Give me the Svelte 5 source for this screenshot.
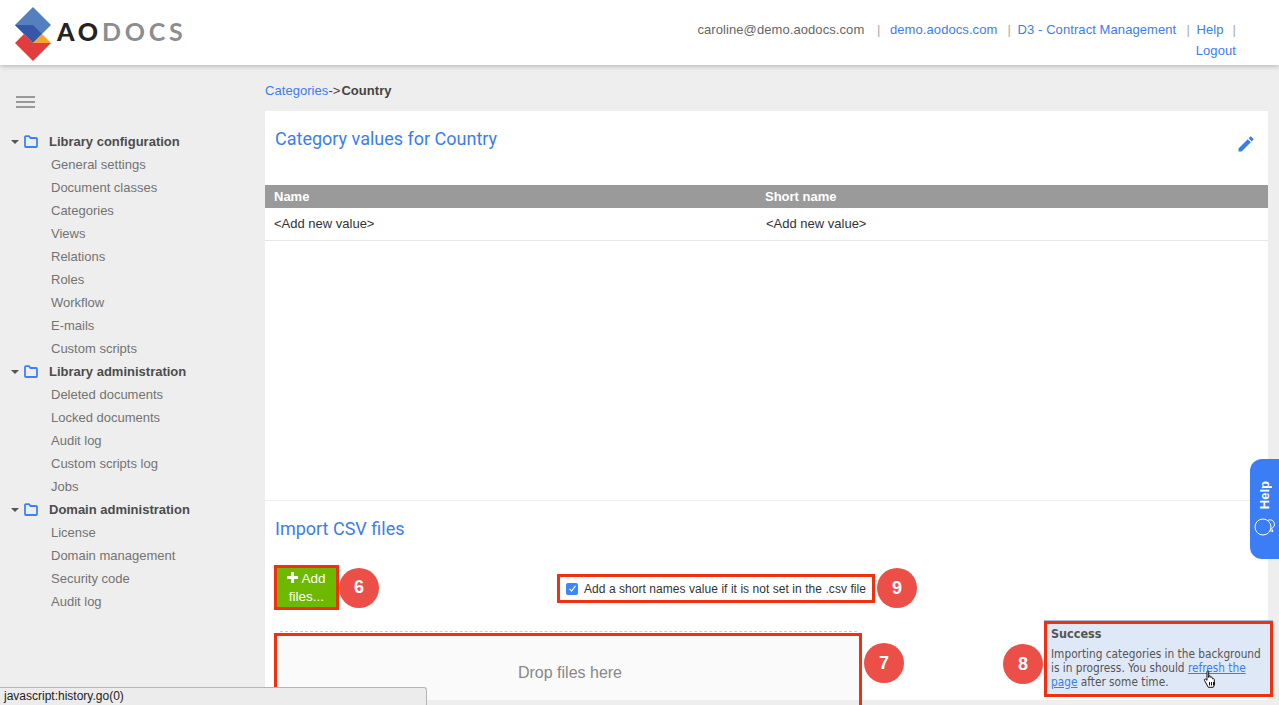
<script>
  const groups = [
    {
      title: "Library configuration",
      items: ["General settings", "Document classes", "Categories", "Views", "Relations", "Roles", "Workflow", "E-mails", "Custom scripts"]
    },
    {
      title: "Library administration",
      items: ["Deleted documents", "Locked documents", "Audit log", "Custom scripts log", "Jobs"]
    },
    {
      title: "Domain administration",
      items: ["License", "Domain management", "Security code", "Audit log"]
    }
  ];
</script>

<header class="topbar">
  <div class="logo">
    <svg width="37" height="56" viewBox="0 0 37 56" aria-hidden="true">
      <polygon points="18,1 36,19 18,37 0,19" fill="#5580c0" />
      <polygon points="0,19 18,19 27,28 18,37" fill="#3458a8" />
      <polygon points="0,37 9,28 18,37 36,37 18,55" fill="#e23c3c" />
      <polygon points="18,37 27,28 36,37" fill="#f5a62b" />
    </svg>
    <span class="wordmark"><b>AO</b>DOCS</span>
  </div>
  <nav class="toplinks">
    <span class="user">caroline@demo.aodocs.com</span>
    <span class="sep first">|</span><a href="#top">demo.aodocs.com</a>
    <span class="sep">|</span><a href="#top">D3 - Contract Management</a>
    <span class="sep">|</span><a href="#top">Help</a><span class="sep last">|</span>
    <a href="#top">Logout</a>
  </nav>
</header>

<div class="layout">
  <aside class="sidebar">
    <div class="burger"><i></i><i></i><i></i></div>
    {#each groups as group}
      <div class="group-title">
        <span class="caret"></span>
        <svg width="14" height="13" viewBox="0 0 14 13" aria-hidden="true">
          <path d="M1 3.5V11a1 1 0 0 0 1 1h10a1 1 0 0 0 1-1V4a1 1 0 0 0-1-1H6.5L5 1.2H2a1 1 0 0 0-1 1z" fill="none" stroke="#3b82f6" stroke-width="1.8" />
        </svg>
        <span>{group.title}</span>
      </div>
      <ul>
        {#each group.items as item}
          <li>{item}</li>
        {/each}
      </ul>
    {/each}
  </aside>

  <main class="content">
    <div class="crumbs"><a href="#top">Categories</a>-&gt;<b>Country</b></div>

    <section class="panel">
      <div class="panel-head">
        <h2>Category values for Country</h2>
        <svg class="edit" width="20" height="20" viewBox="0 0 24 24" aria-hidden="true">
          <path d="M3 17.25V21h3.75L17.81 9.94l-3.75-3.75L3 17.25zM20.71 7.04c.39-.39.39-1.02 0-1.41l-2.34-2.34c-.39-.39-1.02-.39-1.41 0l-1.83 1.83 3.75 3.75 1.83-1.83z" fill="#3b7de8" />
        </svg>
      </div>

      <div class="table">
        <div class="thead"><span>Name</span><span>Short name</span></div>
        <div class="trow"><span>&lt;Add new value&gt;</span><span class="second">&lt;Add new value&gt;</span></div>
      </div>

      <div class="import">
        <h2>Import CSV files</h2>
        <div class="toolbar">
          <button class="add">
            <svg width="11" height="11" viewBox="0 0 11 11" aria-hidden="true"><path d="M4 0h3v4h4v3H7v4H4V7H0V4h4z" fill="#fff" /></svg>
            Add files...
          </button>
          <span class="badge">6</span>
          <label class="short">
            <span class="check">
              <svg width="9" height="9" viewBox="0 0 9 9" aria-hidden="true"><path d="M1.5 4.8 3.6 7 7.5 1.8" fill="none" stroke="#fff" stroke-width="1.2" /></svg>
            </span>
            Add a short names value if it is not set in the .csv file
          </label>
          <span class="badge after-short">9</span>
        </div>
        <div class="dropline"></div>
        <div class="dropzone">Drop files here</div>
        <span class="badge b7">7</span>
      </div>

      <span class="badge b8">8</span>
      <div class="notice">
        <strong>Success</strong>
        <p>Importing categories in the background is in progress. You should <a href="#top">refresh the page</a> after some time.</p>
        <svg class="hand" width="15" height="19" viewBox="0 0 15 19" aria-hidden="true">
          <path d="M4 1.2c.8-.5 1.700 0 1.700.9v5.400l.3-1.500c.8-.5 1.600-.2 1.700.7l.1.800c.7-.6 1.600-.3 1.700.6l.1.700c.8-.5 1.600-.1 1.700.8l.2 4.400c0 1.400-.6 2.300-1.300 3.300H5.300L1.500 10.500c-.6-.9.500-1.900 1.400-1.200l1.100 1z" fill="#fff" stroke="#111" stroke-width="1" />
          <path d="M6.500 12v3.500M8.500 12v3.500M10.500 12v3.500" stroke="#111" stroke-width="1" />
        </svg>
      </div>
    </section>
  </main>
</div>

<aside class="help-tab">
  <span>Help</span>
  <svg width="24" height="24" viewBox="0 0 24 24" aria-hidden="true">
    <circle cx="10" cy="10" r="8" fill="none" stroke="#fff" stroke-width="1" />
    <path d="M14.500 3.500a4.500 4.500 0 1 1 4 8l1.500 3-3.500-1" fill="none" stroke="#fff" stroke-width="1" />
  </svg>
</aside>

<div class="status">javascript:history.go(0)</div>

<style>
  :global(body) {
    background: #eeeeee;
    font-family: "Liberation Sans", Arial, sans-serif;
    font-size: 13px;
    color: #444;
    overflow: hidden;
    height: 705px;
  }

  a {
    color: #3b7df0;
    text-decoration: none;
  }

  .topbar {
    height: 65px;
    background: #fff;
    box-shadow: 0 1px 5px rgba(0, 0, 0, 0.25);
    display: flex;
    justify-content: space-between;
    position: relative;
  }

  .logo {
    display: flex;
    align-items: center;
    gap: 5px;
    padding: 2px 0 0 15px;
  }

  .wordmark {
    font-family: Lato, sans-serif;
    font-weight: 700;
    font-size: 25px;
    letter-spacing: 3.800px;
    color: #8b8e91;
    margin-top: -5px;
  }

  .wordmark b {
    color: #232323;
  }

  .toplinks {
    width: 545px;
    padding: 19px 43px 0 0;
    text-align: right;
    line-height: 21px;
    letter-spacing: 0.08px;
  }

  .user {
    color: #666;
  }

  .sep {
    color: #aaa;
    margin: 0 6.500px;
  }

  .sep.first {
    margin: 0 9.500px 0 9px;
  }

  .sep.last {
    margin: 0 0 0 9px;
  }

  .layout {
    display: grid;
    grid-template-columns: 265px 1fr;
  }

  .sidebar {
    padding-top: 31px;
  }

  .burger {
    margin: 0 0 22px 16px;
    width: 19px;
    display: flex;
    flex-direction: column;
    gap: 3px;
  }

  .burger i {
    height: 2px;
    background: #999;
  }

  .group-title {
    height: 23px;
    display: flex;
    align-items: center;
    font-weight: 700;
    font-size: 13px;
    color: #4c4c4c;
    padding-left: 11px;
  }

  .group-title svg {
    margin: 0 11px 0 5px;
  }

  .caret {
    width: 0;
    height: 0;
    border: 4px solid transparent;
    border-top: 4px solid #555;
    border-bottom: 0;
  }

  ul {
    list-style: none;
    margin: 0;
    padding: 0 0 0 51px;
    color: #737373;
  }

  li {
    height: 23px;
    line-height: 23px;
  }

  .crumbs {
    height: 46px;
    line-height: 52px;
    letter-spacing: 0.05px;
  }

  .crumbs b {
    margin-left: 1px;
  }

  .panel {
    position: relative;
    width: 1003px;
    height: 589px;
    background: #fff;
    display: flex;
    flex-direction: column;
  }

  h2 {
    margin: 0;
    font-weight: 400;
    font-size: 18px;
    color: #3b7df0;
    font-family: Roboto, sans-serif;
  }

  .panel-head {
    height: 74px;
    padding: 17px 12px 0 10px;
    box-sizing: border-box;
    display: flex;
    justify-content: space-between;
  }

  .edit {
    margin-top: 6px;
  }

  .thead,
  .trow {
    display: grid;
    grid-template-columns: 491px 1fr;
    padding-left: 9px;
  }

  .thead {
    height: 23px;
    line-height: 23px;
    background: #9a9a9a;
    color: #fff;
    font-weight: 700;
  }

  .trow {
    height: 33px;
    line-height: 31px;
    color: #333;
    border-bottom: 1px solid #e6e6e6;
    box-sizing: border-box;
  }

  .second {
    padding-left: 1px;
  }

  .import {
    margin-top: auto;
    height: 200px;
    box-sizing: border-box;
    border-top: 1px solid #eee;
    padding: 17px 0 0 9px;
    position: relative;
  }

  .import h2 {
    margin-left: 1px;
  }

  .toolbar {
    display: flex;
    align-items: center;
    margin-top: 26px;
    height: 45px;
  }

  .add {
    width: 65px;
    height: 45px;
    box-sizing: border-box;
    border: 3px solid #f0300e;
    background: #6cb900;
    color: #fff;
    font: inherit;
    font-size: 13.500px;
    padding: 0 4px;
    line-height: 18px;
  }

  .short {
    display: flex;
    align-items: center;
    gap: 6px;
    height: 29px;
    box-sizing: border-box;
    border: 3px solid #f0300e;
    margin: 2px 0 0 178px;
    padding: 0 6px;
    font-size: 12px;
    letter-spacing: 0.055px;
    color: #333;
  }

  .check {
    width: 12px;
    height: 12px;
    border-radius: 2px;
    background: #3b87f5;
    display: grid;
    place-items: center;
  }

  .badge {
    width: 40px;
    height: 40px;
    border-radius: 50%;
    background: #ec4f47;
    color: #fff;
    font-weight: 700;
    font-size: 18px;
    display: grid;
    place-items: center;
  }

  .after-short {
    margin: 1px 0 0 2px;
  }

  .b7 {
    position: absolute;
    left: 599px;
    top: 142px;
  }

  .b8 {
    position: absolute;
    left: 738px;
    top: 533px;
  }

  .dropline {
    margin: 21px 0 0 6px;
    width: 577px;
    border-top: 1px dashed #ccc;
  }

  .dropzone {
    width: 588px;
    height: 90px;
    box-sizing: border-box;
    margin-top: 1px;
    padding-left: 4px;
    border: 3px solid #f0300e;
    background-color: transparent;
    background-image: linear-gradient(#fafafa, #fafafa);
    background-repeat: no-repeat;
    background-size: 100% 64px;
    background-clip: padding-box;
    text-align: center;
    line-height: 74px;
    font-size: 16px;
    color: #888;
  }

  .notice {
    position: absolute;
    left: 779px;
    top: 510px;
    width: 229px;
    height: 76px;
    box-sizing: border-box;
    border: 3px solid #f0300e;
    background: #dfe8f6;
    box-shadow: 0 -1px 0 #a9bcd8;
    padding: 1px 4px;
    font-family: "DejaVu Sans Condensed", "DejaVu Sans", sans-serif;
    font-stretch: condensed;
    font-size: 11.750px;
    line-height: 14px;
    color: #555;
  }

  .notice strong {
    display: block;
    font-size: 12.500px;
    line-height: 17px;
    margin-bottom: 5px;
  }

  .notice p {
    margin: 0;
  }

  .notice a {
    text-decoration: underline;
  }

  .hand {
    position: absolute;
    left: 156px;
    top: 46px;
  }

  .help-tab {
    position: fixed;
    right: 0;
    top: 459px;
    width: 29px;
    height: 100px;
    background: #3b7df5;
    border-radius: 12px 0 0 12px;
    color: #fff;
    display: flex;
    flex-direction: column;
    align-items: center;
    padding-top: 22px;
    box-sizing: border-box;
    gap: 8px;
  }

  .help-tab span {
    writing-mode: vertical-rl;
    transform: rotate(180deg);
    font-weight: 700;
    font-size: 13px;
  }

  .status {
    position: fixed;
    left: 0;
    bottom: 0;
    width: 427px;
    height: 18px;
    box-sizing: border-box;
    background: #ececec;
    border: 1px solid #b5b5b5;
    border-bottom: 0;
    border-left: 0;
    border-radius: 0 3px 0 0;
    font-size: 12px;
    line-height: 17px;
    padding-left: 4px;
    color: #222;
  }
</style>
